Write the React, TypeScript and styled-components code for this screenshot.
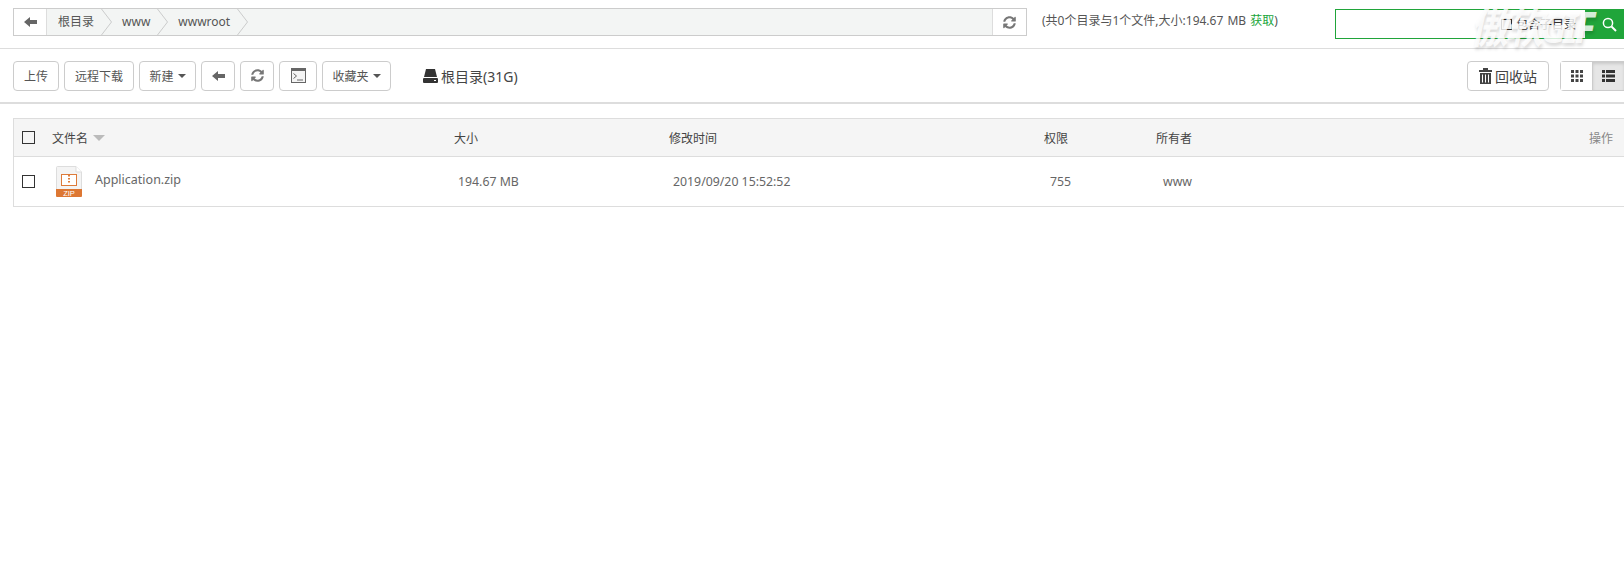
import React from "react";
import styled, { createGlobalStyle } from "styled-components";

const GlobalStyle = createGlobalStyle`
  html, body {
    margin: 0;
    background: #fff;
    overflow: hidden;
  }
  body {
    font-family: "Noto Sans", "Noto Sans CJK SC", sans-serif;
    font-size: 12px;
    color: #555;
  }
`;

const ArrowLeft = () => (
  <svg width="13" height="12" viewBox="0 0 13 12" fill="#666">
    <path d="M0 6 L6 1 V4 H13 V8 H6 V11 Z" />
  </svg>
);

const Refresh = () => (
  <svg width="13" height="13" viewBox="0 0 512 512" fill="#777">
    <path d="M370.72 133.28C339.46 104 298.9 88 256 88c-77.2 0-143.8 52.9-162.2 126.4-1.3 5.3-6.1 9.6-11.6 9.6H24c-7.5 0-13.2-6.8-11.8-14.2C34.1 95.7 135 8 256 8c66.4 0 126.7 26.1 171 68.6L463 40.7C478 25.6 504 36.3 504 57.6V192c0 13.3-10.7 24-24 24H345.6c-21.4 0-32-25.9-17-41zM32 296h134.4c21.4 0 32 25.9 17 41l-42.1 41.7C172.5 408 213.1 424 256 424c77.2 0 143.8-52.9 162.2-126.4 1.3-5.3 6.1-9.6 11.6-9.6H488c7.5 0 13.2 6.8 11.8 14.2C477.9 416.3 377 504 256 504c-66.4 0-126.7-26.1-171-68.6L49 471.3C34 486.4 8 475.7 8 454.4V320c0-13.3 10.7-24 24-24z" />
  </svg>
);

const Terminal = () => (
  <svg width="15" height="15" viewBox="0 0 15 15">
    <rect x="0.5" y="0.5" width="14" height="14" fill="#f4f4f4" stroke="#666" />
    <rect x="0" y="0" width="15" height="3" fill="#666" />
    <path d="M2.5 5.5 L5.5 8 L2.5 10.5" fill="none" stroke="#666" />
    <path d="M6 12 H12" stroke="#666" />
  </svg>
);

const Disk = () => (
  <svg width="15" height="14" viewBox="0 0 15 14" fill="#333">
    <path d="M3 0 H12 L14 8 H1 Z" />
    <rect x="0" y="9" width="15" height="5" rx="1" />
    <rect x="11" y="11" width="2" height="1" fill="#fff" />
  </svg>
);

const Trash = () => (
  <svg width="13" height="16" viewBox="0 0 13 16" fill="#444">
    <rect x="0" y="2" width="13" height="2" />
    <rect x="4" y="0" width="5" height="2" />
    <path d="M1 5 H12 V16 H1 Z M3 6.5 V14.5 H4 V6.5 Z M6 6.5 V14.5 H7 V6.5 Z M9 6.5 V14.5 H10 V6.5 Z" fillRule="evenodd" />
  </svg>
);

const GridView = () => (
  <svg width="12" height="12" viewBox="0 0 12 12" fill="#444">
    {[0, 4.5, 9].map((y) =>
      [0, 4.5, 9].map((x) => <rect key={`${x}-${y}`} x={x} y={y} width="3" height="3" />)
    )}
  </svg>
);

const ListView = () => (
  <svg width="13" height="12" viewBox="0 0 13 12" fill="#333">
    {[0, 4.5, 9].map((y) => (
      <g key={y}>
        <rect x="0" y={y} width="3" height="3" />
        <rect x="4" y={y} width="9" height="3" />
      </g>
    ))}
  </svg>
);

const SearchIcon = () => (
  <svg width="15" height="15" viewBox="0 0 15 15" fill="none" stroke="#fff" strokeWidth="1.5">
    <circle cx="6" cy="6" r="4.6" />
    <path d="M9.5 9.5 L14 14" strokeWidth="2" />
  </svg>
);

const Chevron = () => (
  <svg width="11" height="26" viewBox="0 0 11 26" fill="none" stroke="#ccc">
    <path d="M0.5 0 L10.5 13 L0.5 26" />
  </svg>
);

const ZipIcon = () => (
  <svg width="26" height="31" viewBox="0 0 26 31">
    <path d="M0.5 1.5 Q0.5 0.5 1.5 0.5 H20 L25.5 6 V24 H0.5 Z" fill="#f4f4f4" stroke="#ddd" />
    <path d="M20 0.5 V6 H25.5" fill="#fff" stroke="#ddd" />
    <rect x="5.5" y="8.5" width="15" height="11" fill="#fff" stroke="#dd7b3a" />
    <path d="M13 9 V18" stroke="#dd7b3a" strokeDasharray="1.5 1.5" strokeWidth="2" />
    <path d="M0 23 H26 V30 Q26 31 25 31 H1 Q0 31 0 30 Z" fill="#dd7733" />
    <text x="13" y="30" textAnchor="middle" fontSize="7.5" fill="#fff" fontFamily="Liberation Sans, sans-serif">
      ZIP
    </text>
  </svg>
);

const Page = styled.div`
  width: 1624px;
  position: relative;
`;

const PathBar = styled.div`
  display: flex;
  align-items: flex-start;
  height: 40px;
  padding: 8px 0 0 13px;
  border-bottom: 1px solid #ddd;
`;

const Breadcrumb = styled.div`
  display: flex;
  width: 1014px;
  height: 28px;
  box-sizing: border-box;
  border: 1px solid #ccc;
  background: #f3f5f4;
`;

const BackCell = styled.div`
  display: flex;
  align-items: center;
  justify-content: center;
  width: 32px;
  background: #fff;
  border-right: 1px solid #ddd;
`;

const Crumbs = styled.div`
  display: flex;
  flex: 1;
  align-items: center;
  color: #555;
`;

const Crumb = styled.span<{ $first?: boolean }>`
  padding: 0 7px 0 ${(p) => (p.$first ? "11px" : "10px")};
  line-height: 26px;
`;

const RefreshCell = styled.div`
  display: flex;
  align-items: center;
  justify-content: center;
  width: 33px;
  height: 100%;
  background: #fff;
  border-left: 1px solid #ddd;
`;

const Summary = styled.div`
  margin-left: 15px;
  line-height: 26px;
  color: #555;
  white-space: nowrap;
  word-spacing: 1px;

  em {
    font-style: normal;
    color: #20a53a;
  }
`;

const SearchBox = styled.div`
  position: absolute;
  top: 9px;
  left: 1335px;
  display: flex;
  align-items: center;
  justify-content: flex-end;
  width: 289px;
  height: 30px;
  box-sizing: border-box;
  border: 1px solid #20a53a;
`;

const SubDir = styled.label`
  display: flex;
  align-items: center;
  gap: 4px;
  margin-right: 9px;
  color: #333;
`;

const TinyCheck = styled.i`
  width: 11px;
  height: 11px;
  box-sizing: border-box;
  border: 1px solid #333;
`;

const SearchButton = styled.div`
  display: flex;
  align-items: center;
  justify-content: flex-end;
  width: 38px;
  height: 100%;
  padding-right: 6px;
  box-sizing: border-box;
  background: #20a53a;
`;

const Watermark = styled.div`
  position: absolute;
  top: 0;
  left: 1470px;
  font-size: 38px;
  font-style: italic;
  font-weight: 700;
  line-height: 52px;
  letter-spacing: -3px;
  white-space: nowrap;
  color: rgba(255, 255, 255, 0.82);
  text-shadow: 1px 2px 3px rgba(0, 0, 0, 0.14);
  transform: scaleY(1.15);
  pointer-events: none;
`;

const Toolbar = styled.div`
  display: flex;
  align-items: center;
  gap: 5px;
  height: 55px;
  padding: 12px 0;
  box-sizing: border-box;
  padding-left: 13px;
  border-bottom: 2px solid #ddd;
`;

const Button = styled.div<{ $width: number }>`
  display: flex;
  align-items: center;
  justify-content: center;
  gap: 4px;
  flex: none;
  width: ${(p) => p.$width}px;
  height: 30px;
  box-sizing: border-box;
  border: 1px solid #ccc;
  border-radius: 4px;
  background: #fff;
  color: #555;
`;

const Caret = styled.i`
  width: 0;
  height: 0;
  border-top: 4px solid #555;
  border-left: 4px solid transparent;
  border-right: 4px solid transparent;
`;

const DiskLabel = styled.div`
  display: flex;
  align-items: center;
  gap: 3px;
  margin-left: 27px;
  color: #444;
  font-size: 14px;
`;

const Spacer = styled.div`
  flex: 1;
`;

const RecycleButton = styled(Button)`
  gap: 3px;
  color: #444;
  font-size: 14px;
  margin-right: 6px;
`;

const ViewGroup = styled.div`
  display: flex;
  flex: none;
  width: 64px;
  height: 30px;
  box-sizing: border-box;
  border: 1px solid #ccc;
  border-right: 0;
  border-radius: 4px 0 0 4px;
`;

const ViewCell = styled.div<{ $active?: boolean }>`
  display: flex;
  align-items: center;
  justify-content: center;
  flex: 1;
  background: ${(p) => (p.$active ? "#e6e6e6" : "#fff")};
  box-shadow: ${(p) => (p.$active ? "inset 0 2px 3px rgba(0,0,0,.125)" : "none")};
  border-left: ${(p) => (p.$active ? "1px solid #ccc" : "0")};
`;

const Table = styled.div`
  margin: 14px 0 0 13px;
  border: 1px solid #ddd;
  border-right: 0;
`;

const Row = styled.div<{ $head?: boolean }>`
  display: grid;
  grid-template-columns: 38px 402px 215px 375px 112px 1fr auto;
  align-items: center;
  height: ${(p) => (p.$head ? "37px" : "49px")};
  padding-right: 11px;
  background: ${(p) => (p.$head ? "#f5f5f5" : "#fff")};
  border-bottom: ${(p) => (p.$head ? "1px solid #ddd" : "0")};
  color: ${(p) => (p.$head ? "#444" : "#666")};
`;

const CheckCell = styled.div`
  padding-left: 8px;
`;

const CheckBox = styled.i`
  display: block;
  width: 13px;
  height: 13px;
  box-sizing: border-box;
  border: 1.5px solid #333;
`;

const NameHead = styled.div`
  display: flex;
  align-items: center;
  gap: 5px;
`;

const SortArrow = styled.i`
  width: 0;
  height: 0;
  margin-top: 1px;
  border-top: 6px solid #bbb;
  border-left: 6px solid transparent;
  border-right: 6px solid transparent;
`;

const NameCell = styled.div`
  display: flex;
  align-items: center;
  gap: 13px;
  padding-left: 4px;
  font-size: 12.5px;

  span {
    margin-top: -5px;
  }
`;

const Value = styled.div`
  padding-left: 4px;
  font-size: 12.3px;
`;

const OwnerValue = styled(Value)`
  padding-left: 7px;
`;

const PermValue = styled(Value)`
  padding-left: 6px;
`;

const ActionHead = styled.div`
  color: #888;
`;

const App: React.FC = () => {
  return (
    <Page>
      <GlobalStyle />
      <PathBar>
        <Breadcrumb>
          <BackCell>
            <ArrowLeft />
          </BackCell>
          <Crumbs>
            <Crumb $first>根目录</Crumb>
            <Chevron />
            <Crumb>www</Crumb>
            <Chevron />
            <Crumb>wwwroot</Crumb>
            <Chevron />
          </Crumbs>
          <RefreshCell>
            <Refresh />
          </RefreshCell>
        </Breadcrumb>
        <Summary>
          (共0个目录与1个文件,大小:194.67 MB <em>获取</em>)
        </Summary>
      </PathBar>
      <SearchBox>
        <SubDir>
          <TinyCheck />
          包含子目录
        </SubDir>
        <SearchButton>
          <SearchIcon />
        </SearchButton>
      </SearchBox>
      <Watermark>傲软GIF</Watermark>
      <Toolbar>
        <Button $width={46}>上传</Button>
        <Button $width={70}>远程下载</Button>
        <Button $width={57}>
          新建 <Caret />
        </Button>
        <Button $width={34}>
          <ArrowLeft />
        </Button>
        <Button $width={34}>
          <Refresh />
        </Button>
        <Button $width={38}>
          <Terminal />
        </Button>
        <Button $width={69}>
          收藏夹 <Caret />
        </Button>
        <DiskLabel>
          <Disk />
          根目录(31G)
        </DiskLabel>
        <Spacer />
        <RecycleButton $width={82}>
          <Trash />
          回收站
        </RecycleButton>
        <ViewGroup>
          <ViewCell>
            <GridView />
          </ViewCell>
          <ViewCell $active>
            <ListView />
          </ViewCell>
        </ViewGroup>
      </Toolbar>
      <Table>
        <Row $head>
          <CheckCell>
            <CheckBox />
          </CheckCell>
          <NameHead>
            文件名
            <SortArrow />
          </NameHead>
          <div>大小</div>
          <div>修改时间</div>
          <div>权限</div>
          <div>所有者</div>
          <ActionHead>操作</ActionHead>
        </Row>
        <Row>
          <CheckCell>
            <CheckBox />
          </CheckCell>
          <NameCell>
            <ZipIcon />
            <span>Application.zip</span>
          </NameCell>
          <Value>194.67 MB</Value>
          <Value>2019/09/20 15:52:52</Value>
          <PermValue>755</PermValue>
          <OwnerValue>www</OwnerValue>
          <div />
        </Row>
      </Table>
    </Page>
  );
};

export default App;
